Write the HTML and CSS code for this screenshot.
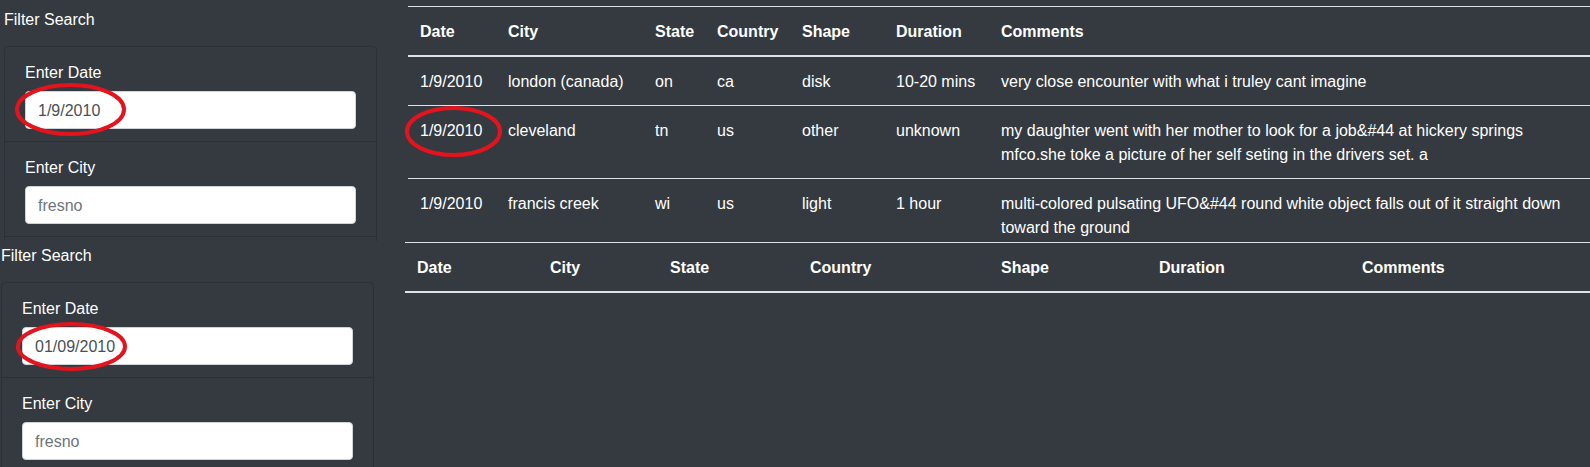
FILE: index.html
```html
<!DOCTYPE html>
<html lang="en">
<head>
<meta charset="utf-8">
<title>UFO Sightings</title>
<link rel="stylesheet" href="styles.css">
</head>
<body>
<section class="shot shot-top">
  <aside class="sidebar">
    <p class="filter-title">Filter Search</p>
    <form class="card">
      <ul class="list-group">
        <li class="list-group-item">
          <label class="field-label" for="datetime1">Enter Date</label>
          <input class="form-control" id="datetime1" type="text" value="1/9/2010">
        </li>
        <li class="list-group-item">
          <label class="field-label" for="city1">Enter City</label>
          <input class="form-control" id="city1" type="text" placeholder="fresno">
        </li>
        <li class="list-group-item list-group-item-empty"></li>
      </ul>
    </form>
  </aside>
  <div class="table-wrap">
    <table class="ufo-table table-top">
      <thead>
        <tr>
          <th class="c-date">Date</th>
          <th class="c-city">City</th>
          <th class="c-state">State</th>
          <th class="c-country">Country</th>
          <th class="c-shape">Shape</th>
          <th class="c-duration">Duration</th>
          <th class="c-comments">Comments</th>
        </tr>
      </thead>
      <tbody>
        <tr>
          <td>1/9/2010</td><td>london (canada)</td><td>on</td><td>ca</td><td>disk</td><td>10-20 mins</td>
          <td>very close encounter with what i truley cant imagine</td>
        </tr>
        <tr>
          <td>1/9/2010</td><td>cleveland</td><td>tn</td><td>us</td><td>other</td><td>unknown</td>
          <td>my daughter went with her mother to look for a job&amp;#44 at hickery springs mfco.she toke a picture of her self seting in the drivers set. a</td>
        </tr>
        <tr>
          <td>1/9/2010</td><td>francis creek</td><td>wi</td><td>us</td><td>light</td><td>1 hour</td>
          <td>multi-colored pulsating UFO&amp;#44 round white object falls out of it straight down toward the ground</td>
        </tr>
      </tbody>
    </table>
  </div>
  <svg class="mark mark-date-top" viewBox="0 0 111 53" aria-hidden="true"><ellipse cx="55.5" cy="26.5" rx="53.5" ry="24.5"/></svg>
  <svg class="mark mark-row" viewBox="0 0 97 51" aria-hidden="true"><ellipse cx="48.5" cy="25.5" rx="46.5" ry="23.5"/></svg>
</section>

<section class="shot shot-bottom">
  <aside class="sidebar">
    <p class="filter-title">Filter Search</p>
    <form class="card">
      <ul class="list-group">
        <li class="list-group-item">
          <label class="field-label" for="datetime2">Enter Date</label>
          <input class="form-control" id="datetime2" type="text" value="01/09/2010">
        </li>
        <li class="list-group-item">
          <label class="field-label" for="city2">Enter City</label>
          <input class="form-control" id="city2" type="text" placeholder="fresno">
        </li>
        <li class="list-group-item list-group-item-empty"></li>
      </ul>
    </form>
  </aside>
  <div class="table-wrap">
    <table class="ufo-table table-bottom">
      <thead>
        <tr>
          <th class="c-date">Date</th>
          <th class="c-city">City</th>
          <th class="c-state">State</th>
          <th class="c-country">Country</th>
          <th class="c-shape">Shape</th>
          <th class="c-duration">Duration</th>
          <th class="c-comments">Comments</th>
        </tr>
      </thead>
      <tbody></tbody>
    </table>
  </div>
  <svg class="mark mark-date-bottom" viewBox="0 0 111 49" aria-hidden="true"><ellipse cx="55.5" cy="24.5" rx="53.5" ry="22.5"/></svg>
</section>
</body>
</html>
```

FILE: styles.css
```css
html, body {
  margin: 0;
  padding: 0;
  height: 100%;
  background: #343a40;
}

body {
  color: #fff;
  font-family: "Segoe UI", "Liberation Sans", Arial, sans-serif;
  font-size: 16px;
  line-height: 1.5;
  overflow: hidden;
}

.shot {
  position: relative;
  display: flex;
  gap: 31px;
  overflow: hidden;
}

.shot-top {
  height: 241px;
  padding-left: 4px;
}

.shot-bottom {
  height: 226px;
  padding-left: 1px;
}

.sidebar {
  flex: 0 0 373px;
  width: 373px;
}

.filter-title {
  margin: 8px 0 14px;
  font-size: 16px;
  line-height: 24px;
  font-weight: 400;
}

.shot-bottom .filter-title {
  margin-top: 3px;
}

.card {
  margin: 0;
  border: 1px solid rgba(0, 0, 0, 0.14);
  border-radius: 4px;
}

.list-group {
  list-style: none;
  margin: 0;
  padding: 0;
}

.list-group-item {
  padding: 12px 20px;
  border-bottom: 1px solid rgba(0, 0, 0, 0.14);
}

.list-group-item:last-child {
  border-bottom: 0;
}

.list-group-item-empty {
  height: 38px;
}

.field-label {
  display: block;
  padding-top: 2px;
  margin-bottom: 6px;
  line-height: 24px;
}

.form-control {
  display: block;
  box-sizing: border-box;
  width: 100%;
  height: 38px;
  padding: 7px 12px 5px;
  font-family: inherit;
  font-size: 16px;
  line-height: 24px;
  color: #495057;
  background: #fff;
  border: 1px solid #ced4da;
  border-radius: 4px;
}

.form-control::placeholder {
  color: #6c757d;
  opacity: 1;
}

.table-wrap {
  flex: 1 1 auto;
  min-width: 0;
}

.ufo-table {
  width: 100%;
  table-layout: fixed;
  border-collapse: collapse;
  color: #fff;
}

.table-top {
  margin-top: 6px;
}

.table-bottom {
  margin-top: 1px;
}

.ufo-table th,
.ufo-table td {
  padding: 13px 12px 11px;
  text-align: left;
  border-top: 1px solid #dee2e6;
  line-height: 24px;
}

.ufo-table th {
  box-sizing: border-box;
  font-weight: 700;
  vertical-align: bottom;
  border-bottom: 2px solid #dee2e6;
}

.ufo-table td {
  vertical-align: top;
}

.table-top .c-date { width: 88px; }
.table-top .c-city { width: 147px; }
.table-top .c-state { width: 62px; }
.table-top .c-country { width: 85px; }
.table-top .c-shape { width: 94px; }
.table-top .c-duration { width: 105px; }

.table-bottom .c-date { width: 133px; }
.table-bottom .c-city { width: 120px; }
.table-bottom .c-state { width: 140px; }
.table-bottom .c-country { width: 191px; }
.table-bottom .c-shape { width: 158px; }
.table-bottom .c-duration { width: 203px; }

.mark {
  position: absolute;
  overflow: visible;
  pointer-events: none;
}

.mark ellipse {
  fill: none;
  stroke: #e3141d;
  stroke-width: 4;
}

.mark-date-top {
  left: 15px;
  top: 83px;
  width: 111px;
  height: 53px;
}

.mark-row {
  left: 405px;
  top: 106px;
  width: 97px;
  height: 51px;
}

.mark-date-bottom {
  left: 16px;
  top: 81px;
  width: 111px;
  height: 49px;
}
```
